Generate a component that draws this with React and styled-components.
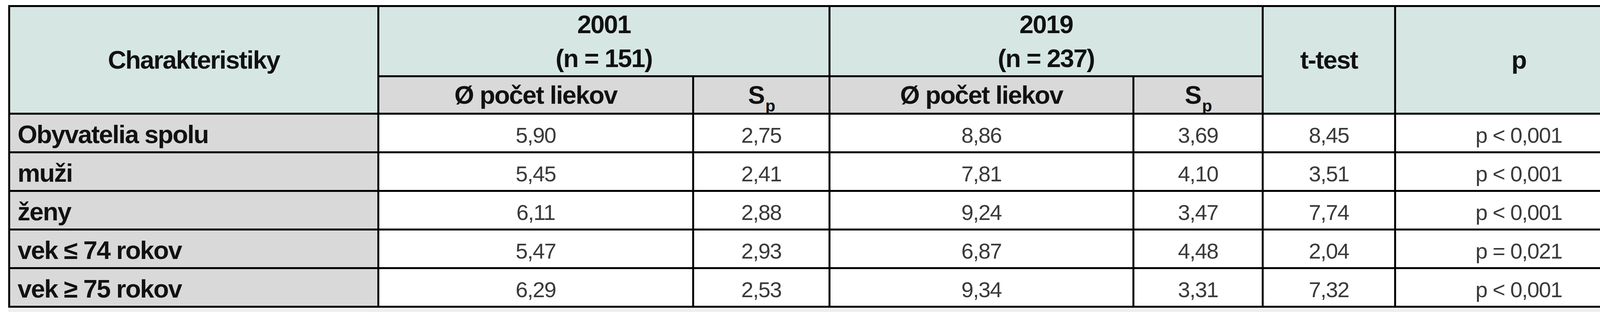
import styled, { createGlobalStyle } from 'styled-components';

const GlobalStyle = createGlobalStyle`
  body {
    margin: 0;
    background: #ffffff;
    font-family: "Liberation Sans", Arial, sans-serif;
  }
`

const rows = [
    { label: 'Obyvatelia spolu', values: ['5,90', '2,75', '8,86', '3,69', '8,45', 'p < 0,001'] },
    { label: 'muži', values: ['5,45', '2,41', '7,81', '4,10', '3,51', 'p < 0,001'] },
    { label: 'ženy', values: ['6,11', '2,88', '9,24', '3,47', '7,74', 'p < 0,001'] },
    { label: 'vek ≤ 74 rokov', values: ['5,47', '2,93', '6,87', '4,48', '2,04', 'p = 0,021'] },
    { label: 'vek ≥ 75 rokov', values: ['6,29', '2,53', '9,34', '3,31', '7,32', 'p < 0,001'] },
]

const App = () => {
    return (
        <>
            <GlobalStyle />
            <Page>
                <Sheet>
                    <HeadCell $col="1" $row="1 / 3">Charakteristiky</HeadCell>
                    <HeadCell $col="2 / 4" $row="1">
                        <Line>2001</Line>
                        <Line>(n = 151)</Line>
                    </HeadCell>
                    <HeadCell $col="4 / 6" $row="1">
                        <Line>2019</Line>
                        <Line>(n = 237)</Line>
                    </HeadCell>
                    <HeadCell $col="6" $row="1 / 3">t-test</HeadCell>
                    <HeadCell $col="7" $row="1 / 3">p</HeadCell>
                    <HeadCell $col="2" $row="2" $tone="gray">Ø počet liekov</HeadCell>
                    <HeadCell $col="3" $row="2" $tone="gray">
                        <Line>S<Sub>p</Sub></Line>
                    </HeadCell>
                    <HeadCell $col="4" $row="2" $tone="gray">Ø počet liekov</HeadCell>
                    <HeadCell $col="5" $row="2" $tone="gray">
                        <Line>S<Sub>p</Sub></Line>
                    </HeadCell>
                    {rows.map((row) => (
                        <Row key={row.label}>
                            <LabelCell>{row.label}</LabelCell>
                            {row.values.map((v, i) => (
                                <ValueCell key={i}>{v}</ValueCell>
                            ))}
                        </Row>
                    ))}
                </Sheet>
                <FootStrip />
            </Page>
        </>
    );
};

export default App;

const Page = styled.div`
    padding: 13px 0 0 21px;
`
const Sheet = styled.div`
    display: grid;
    grid-template-columns: 945px 806px 349px 778px 331px 339px 633px;
    grid-template-rows: 180px 96px repeat(5, 99px);
    width: max-content;
    border-left: 5px solid #000;
    border-top: 5px solid #000;
`
const Row = styled.div`
    display: contents;
`
const Cell = styled.div`
    box-sizing: border-box;
    display: flex;
    align-items: center;
    justify-content: center;
    overflow: hidden;
    border-right: 5px solid #000;
    border-bottom: 5px solid #000;
    white-space: nowrap;
`
const HeadCell = styled(Cell)`
    flex-direction: column;
    grid-column: ${(p) => p.$col};
    grid-row: ${(p) => p.$row};
    background: ${(p) => (p.$tone === 'gray' ? '#d9d9d9' : '#d6e6e3')};
    color: #111;
    font-size: 65px;
    font-weight: 700;
    letter-spacing: -2px;
    line-height: 87px;
    text-align: center;
`
const Line = styled.span`
    display: block;
`
const Sub = styled.span`
    font-size: 42px;
    line-height: 0;
    vertical-align: -20px;
    margin-left: 3px;
`
const LabelCell = styled(Cell)`
    justify-content: flex-start;
    padding: 6px 0 0 19px;
    background: #d9d9d9;
    color: #111;
    font-size: 65px;
    font-weight: 700;
    letter-spacing: -2px;
    line-height: 1;
`
const ValueCell = styled(Cell)`
    padding-top: 11px;
    background: #ffffff;
    color: #3a3a3a;
    font-size: 56px;
    letter-spacing: -1.5px;
    line-height: 1;
`
const FootStrip = styled.div`
    height: 11px;
    background: #efefef;
`
